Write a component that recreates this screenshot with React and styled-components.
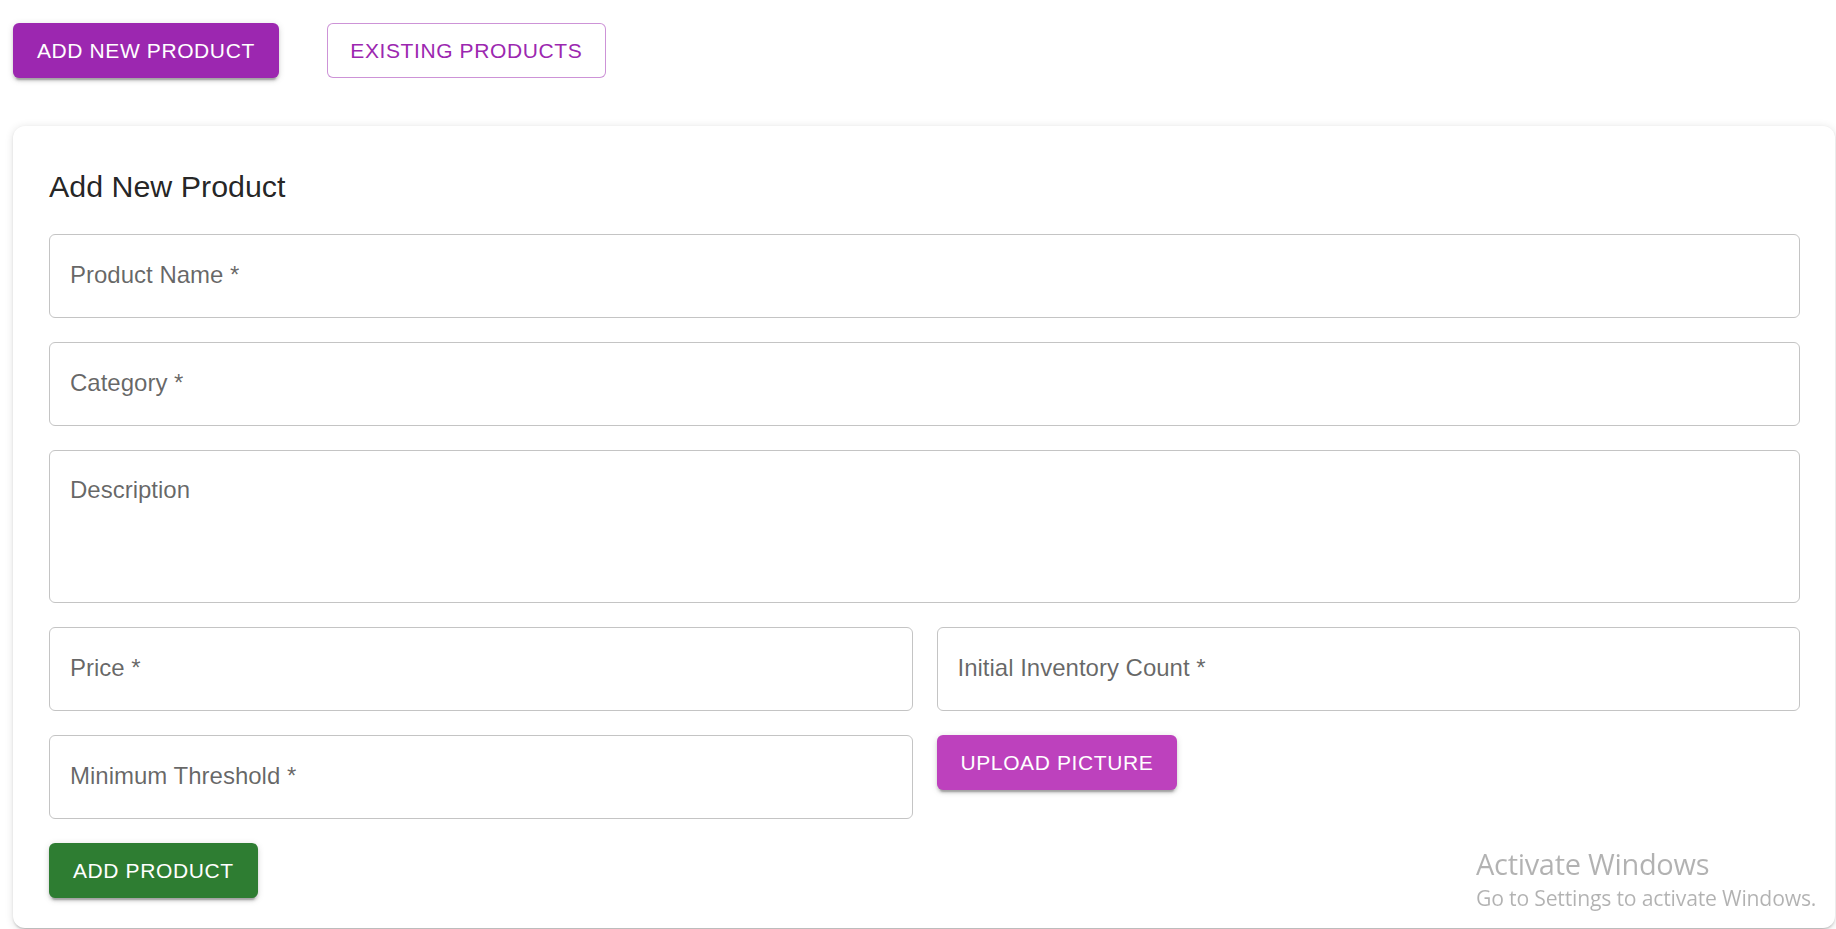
import React from "react";
import styled, { createGlobalStyle, css } from "styled-components";

const Global = createGlobalStyle`
  html, body { margin: 0; padding: 0; background: #ffffff; }
  body { font-family: "Liberation Sans", Arial, sans-serif; overflow: hidden; }
  * { box-sizing: border-box; }
`;

const Page = styled.div`
  padding: 23px 1px 0 13px;
  min-height: 929px;
`;

const Toolbar = styled.div`
  display: flex;
  gap: 48px;
  align-items: center;
`;

const elevation = `0px 4.5px 1.5px -3px rgba(0,0,0,0.2), 0px 3px 3px 0px rgba(0,0,0,0.14), 0px 1.5px 7.5px 0px rgba(0,0,0,0.12)`;

const palette = {
  purple: { bg: "#9c27b0", fg: "#ffffff" },
  orchid: { bg: "#bd41bd", fg: "#ffffff" },
  green: { bg: "#2e7d32", fg: "#ffffff" },
};

const Button = styled.button`
  font-family: "Liberation Sans", Arial, sans-serif;
  font-size: 21px;
  font-weight: 400;
  letter-spacing: 0.6px;
  text-transform: uppercase;
  height: 55px;
  padding: 0 24px;
  border-radius: 6px;
  cursor: pointer;
  white-space: nowrap;
  line-height: 1;
  ${({ $tone }) =>
    $tone === "outline"
      ? css`
          background: #ffffff;
          color: #9c27b0;
          border: 1px solid rgba(156, 39, 176, 0.5);
          padding: 0 22.5px;
        `
      : css`
          background: ${palette[$tone].bg};
          color: ${palette[$tone].fg};
          border: none;
          box-shadow: ${elevation};
        `}
`;

const Card = styled.section`
  margin-top: 48px;
  background: #ffffff;
  border-radius: 12px;
  box-shadow: 0px 3px 1.5px -2px rgba(0,0,0,0.14), 0px 1.5px 2px 0px rgba(0,0,0,0.1), 0px 1.5px 8px 0px rgba(0,0,0,0.12);
  padding: 36px 35px 30px 36px;
  display: flex;
  flex-direction: column;
`;

const Title = styled.h2`
  margin: 0 0 24px 0;
  font-family: "Liberation Sans", Arial, sans-serif;
  font-size: 30.4px;
  font-weight: 400;
  line-height: 48px;
  color: rgba(0, 0, 0, 0.87);
`;

const Form = styled.div`
  display: flex;
  flex-direction: column;
  gap: 24px;
  align-items: flex-start;
`;

const fieldBase = css`
  display: block;
  width: 100%;
  font-family: "Liberation Sans", Arial, sans-serif;
  font-size: 24px;
  color: rgba(0, 0, 0, 0.87);
  background: #ffffff;
  border: 1px solid #c4c4c4;
  border-radius: 6px;
  outline: none;
  padding: 0 20px;
  &::placeholder {
    color: rgba(0, 0, 0, 0.6);
    opacity: 1;
  }
`;

const Input = styled.input`
  ${fieldBase};
  height: 84px;
  padding-bottom: 2px;
`;

const TextArea = styled.textarea`
  ${fieldBase};
  height: 153px;
  padding-top: 22px;
  line-height: 34.5px;
  resize: none;
`;

const Grid = styled.div`
  display: grid;
  width: 100%;
  grid-template-columns: 1fr 1fr;
  gap: 24px;
  align-items: start;
`;

const Cell = styled.div`
  display: flex;
  justify-content: flex-start;
`;

const Watermark = styled.div`
  position: fixed;
  left: 1476px;
  top: 846px;
  color: rgba(0, 0, 0, 0.3);
  font-family: "Open Sans", "Noto Sans", sans-serif;
  pointer-events: none;
`;

const WatermarkTitle = styled.div`
  font-size: 29px;
  line-height: 36px;
  letter-spacing: -0.3px;
`;

const WatermarkText = styled.div`
  font-size: 21.2px;
  line-height: 32px;
  letter-spacing: -0.2px;
`;

export default function App() {
  return (
    <>
      <Global />
      <Page>
        <Toolbar>
          <Button $tone="purple">Add New Product</Button>
          <Button $tone="outline">Existing Products</Button>
        </Toolbar>
        <Card>
          <Title>Add New Product</Title>
          <Form>
            <Input placeholder="Product Name *" />
            <Input placeholder="Category *" />
            <TextArea placeholder="Description" />
            <Grid>
              <Input placeholder="Price *" />
              <Input placeholder="Initial Inventory Count *" />
              <Input placeholder="Minimum Threshold *" />
              <Cell>
                <Button $tone="orchid">Upload Picture</Button>
              </Cell>
            </Grid>
            <Button $tone="green">Add Product</Button>
          </Form>
        </Card>
      </Page>
      <Watermark>
        <WatermarkTitle>Activate Windows</WatermarkTitle>
        <WatermarkText>Go to Settings to activate Windows.</WatermarkText>
      </Watermark>
    </>
  );
}
